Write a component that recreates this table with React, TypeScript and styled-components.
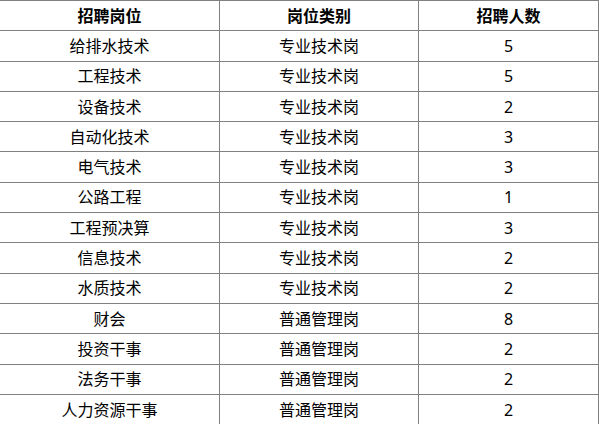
import React from 'react';
import styled, { createGlobalStyle } from 'styled-components';

const GlobalStyle = createGlobalStyle`
  html, body {
    margin: 0;
    padding: 0;
    background: #fff;
  }
  body {
    overflow: hidden;
  }
`;

type Job = { name: string; kind: string; count: number };

const jobs: Job[] = [
  { name: '给排水技术', kind: '专业技术岗', count: 5 },
  { name: '工程技术', kind: '专业技术岗', count: 5 },
  { name: '设备技术', kind: '专业技术岗', count: 2 },
  { name: '自动化技术', kind: '专业技术岗', count: 3 },
  { name: '电气技术', kind: '专业技术岗', count: 3 },
  { name: '公路工程', kind: '专业技术岗', count: 1 },
  { name: '工程预决算', kind: '专业技术岗', count: 3 },
  { name: '信息技术', kind: '专业技术岗', count: 2 },
  { name: '水质技术', kind: '专业技术岗', count: 2 },
  { name: '财会', kind: '普通管理岗', count: 8 },
  { name: '投资干事', kind: '普通管理岗', count: 2 },
  { name: '法务干事', kind: '普通管理岗', count: 2 },
  { name: '人力资源干事', kind: '普通管理岗', count: 2 },
];

function App(): React.ReactElement {
  return (
    <>
      <GlobalStyle />
      <Table>
        <Cell $head>招聘岗位</Cell>
        <Cell $head>岗位类别</Cell>
        <Cell $head>招聘人数</Cell>
        {jobs.map((job) => (
          <React.Fragment key={job.name}>
            <Cell>{job.name}</Cell>
            <Cell>{job.kind}</Cell>
            <Cell>{job.count}</Cell>
          </React.Fragment>
        ))}
      </Table>
    </>
  );
}

export default App;

const Table = styled.div`
  display: grid;
  grid-template-columns: 219px 198px 179px;
  grid-auto-rows: 29.31px;
  gap: 1px;
  padding: 1px 1px 0 1px;
  margin-left: -1px;
  width: fit-content;
  background: #808080;
`;

const Cell = styled.div<{ $head?: boolean }>`
  display: flex;
  align-items: center;
  justify-content: center;
  background: #fff;
  color: #000;
  font-family: 'Noto Sans', 'Noto Sans CJK SC', sans-serif;
  font-size: 16px;
  line-height: 1;
  font-weight: ${(p) => (p.$head ? 700 : 400)};
`;
